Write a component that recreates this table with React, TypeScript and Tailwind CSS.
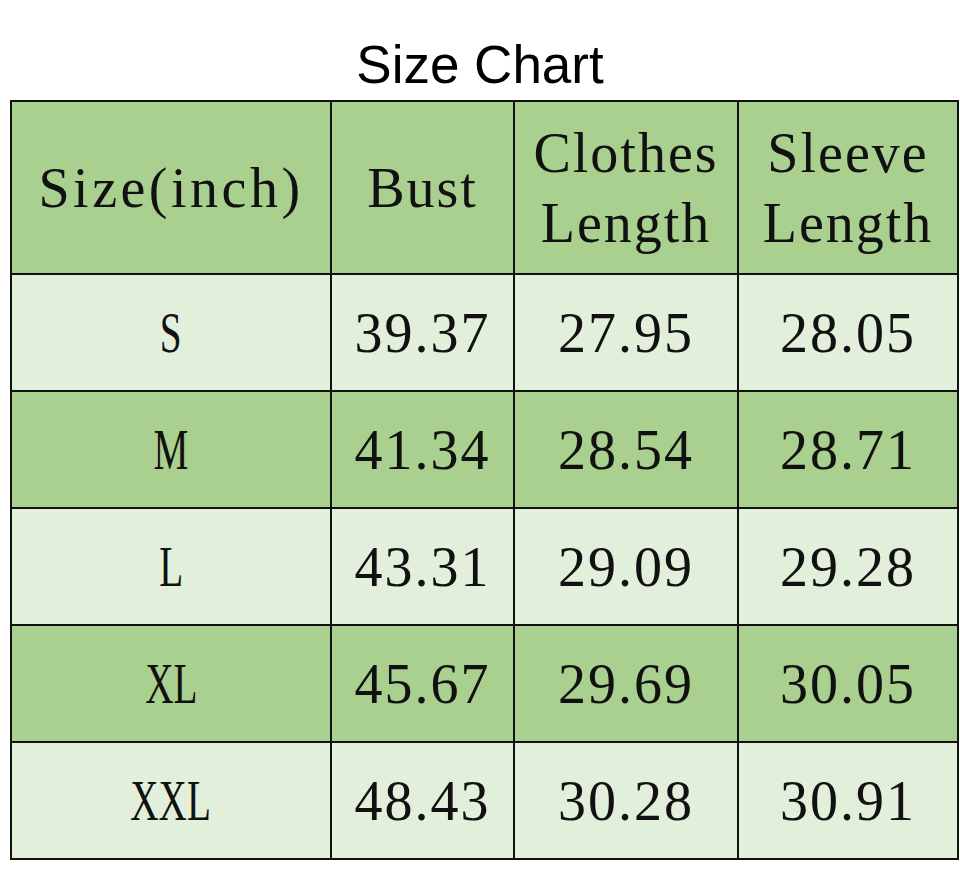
import React from "react"

// 尺码表数据
interface SizeRow {
  size: string
  bust: string
  clothes: string
  sleeve: string
}

const rows: SizeRow[] = [
  { size: "S", bust: "39.37", clothes: "27.95", sleeve: "28.05" },
  { size: "M", bust: "41.34", clothes: "28.54", sleeve: "28.71" },
  { size: "L", bust: "43.31", clothes: "29.09", sleeve: "29.28" },
  { size: "XL", bust: "45.67", clothes: "29.69", sleeve: "30.05" },
  { size: "XXL", bust: "48.43", clothes: "30.28", sleeve: "30.91" },
]

const cell =
  "border-2 border-[#111] text-center align-middle font-normal text-[56px] tracking-[2px] text-[#111]"

export default function App() {
  return (
    <div className="h-[872px] w-[960px] bg-white">
      {/* 标题 */}
      <h1 className="pt-[38px] text-center font-['Liberation_Sans',Arial,sans-serif] text-[53px] leading-none text-black">
        Size Chart
      </h1>

      {/* 表格 */}
      <table className="ml-[10px] mt-[9px] w-[947px] table-fixed border-collapse font-['Liberation_Serif','Times_New_Roman',serif]">
        <colgroup>
          <col className="w-[320px]" />
          <col className="w-[183px]" />
          <col className="w-[224px]" />
          <col className="w-[220px]" />
        </colgroup>
        <thead>
          <tr className="h-[173px] bg-[#a9d08e]">
            <th className={`${cell} leading-[70px] tracking-[3.5px]`}>Size(inch)</th>
            <th className={`${cell} leading-[70px]`}>Bust</th>
            <th className={`${cell} leading-[70px]`}>
              Clothes
              <br />
              Length
            </th>
            <th className={`${cell} leading-[70px]`}>
              Sleeve
              <br />
              Length
            </th>
          </tr>
        </thead>
        <tbody>
          {rows.map((row, index) => (
            <tr
              key={row.size}
              className={index % 2 === 0 ? "h-[117px] bg-[#e2efda]" : "h-[117px] bg-[#a9d08e]"}
            >
              {/* 尺码字母较窄 */}
              <td className={cell}>
                <span className="inline-block scale-x-[0.7] tracking-normal">{row.size}</span>
              </td>
              <td className={cell}>{row.bust}</td>
              <td className={cell}>{row.clothes}</td>
              <td className={cell}>{row.sleeve}</td>
            </tr>
          ))}
        </tbody>
      </table>
    </div>
  )
}
